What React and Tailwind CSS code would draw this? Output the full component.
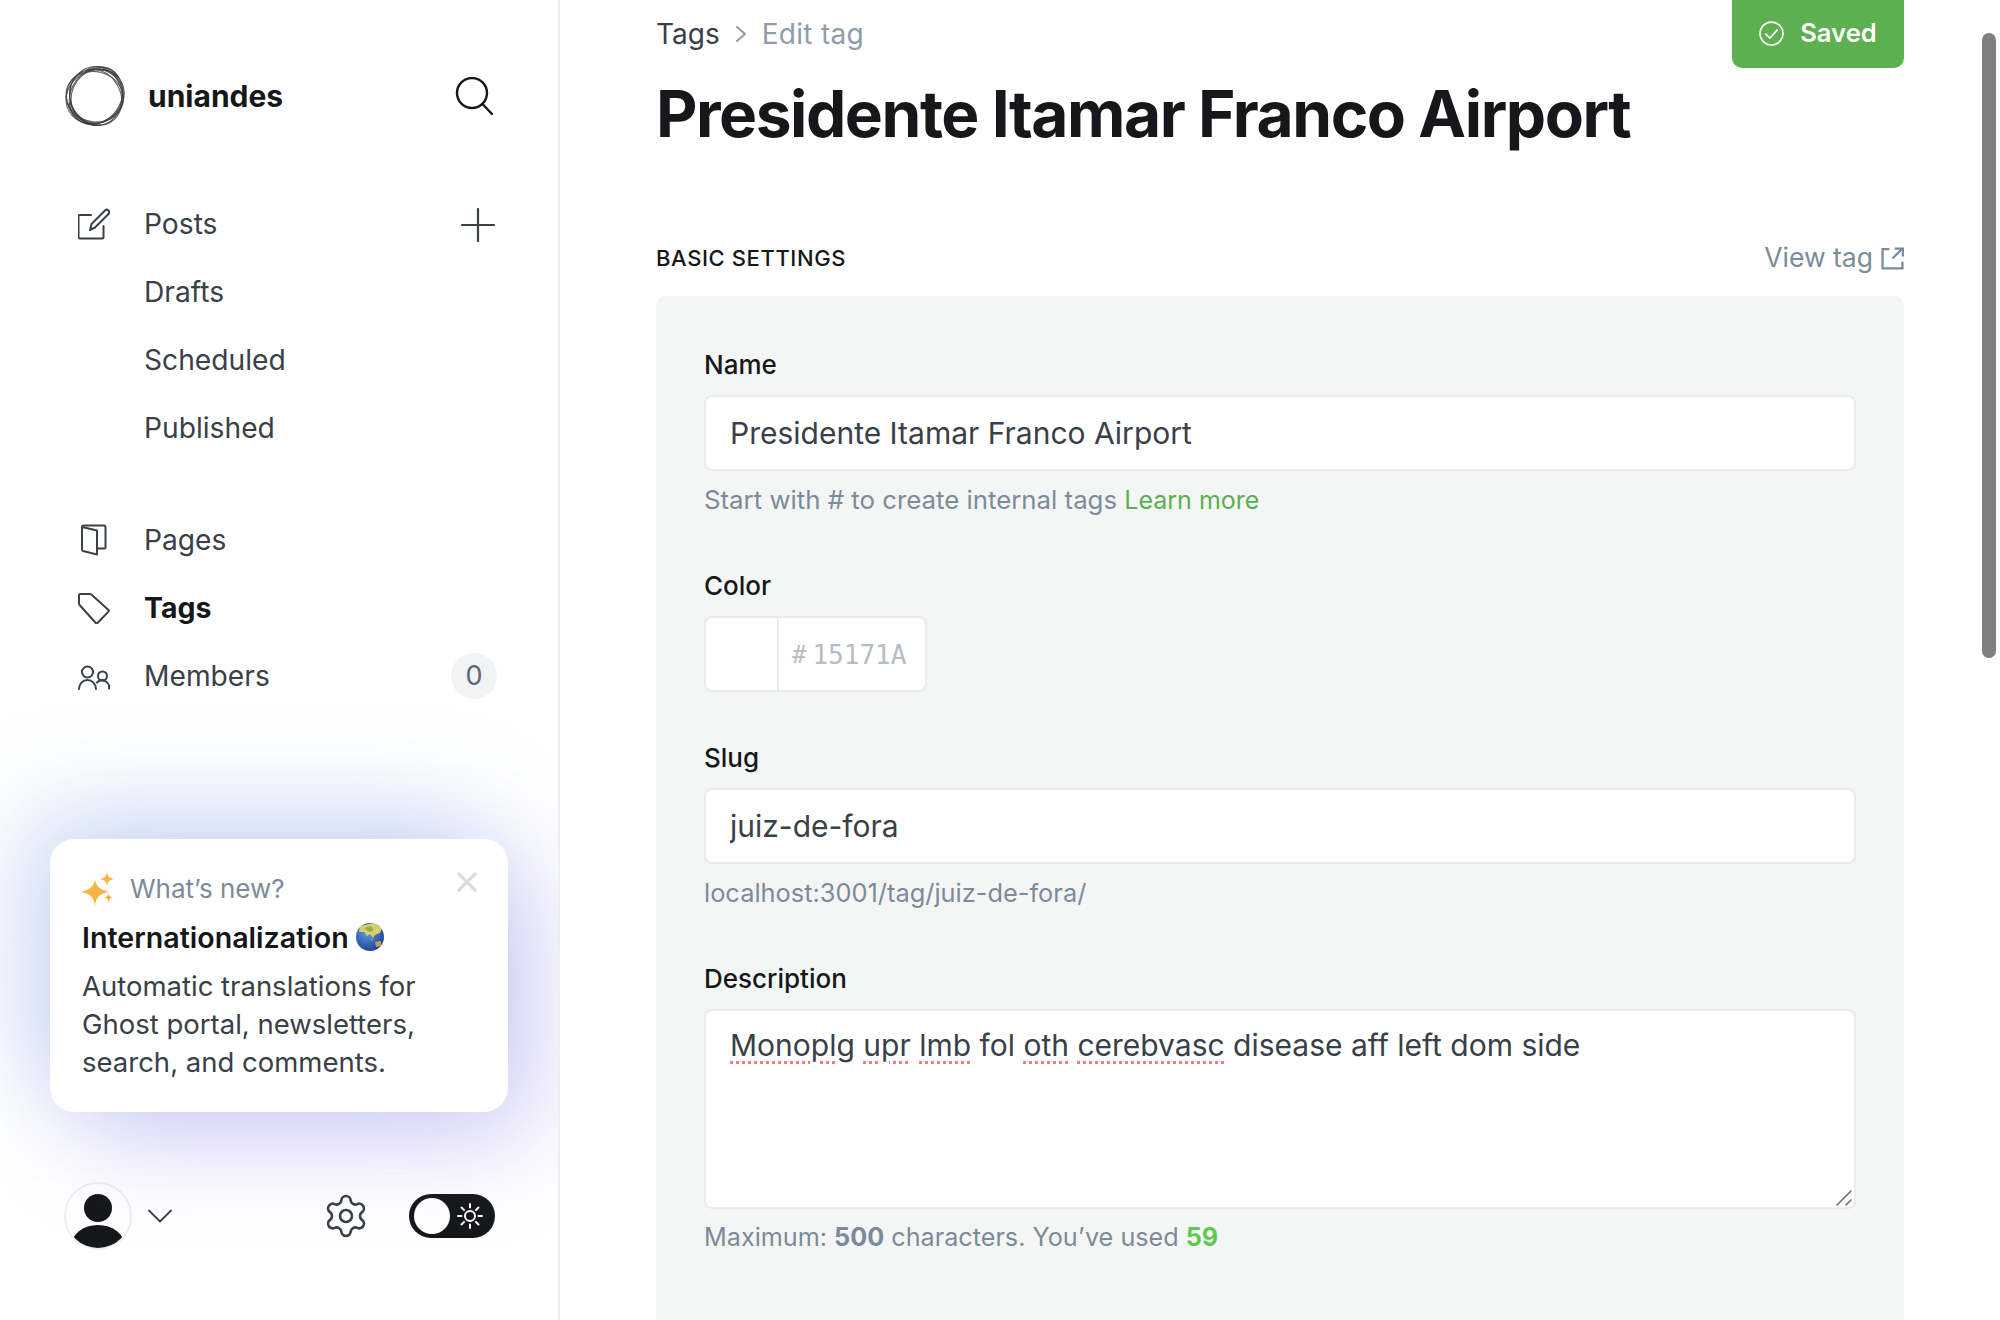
import React from 'react';
import { Settings } from 'lucide-react';

const Row = ({ icon, children, right, bold }) => (
  <div className="flex h-[68px] items-center">
    <div className="flex w-[80px] pl-[14px] shrink-0 items-center">{icon}</div>
    <span className={bold ? 'text-[28.500px] font-bold text-[#15171a]' : 'text-[28.200px] text-[#394047]'}>{children}</span>
    {right && <div className="ml-auto">{right}</div>}
  </div>
);

const Ico = ({ children, fill = 'none' }) => (
  <svg width="32" height="32" viewBox="0 0 32 32" fill={fill} stroke="#394047" strokeWidth="2" strokeLinejoin="round" strokeLinecap="round">{children}</svg>
);

const Logo = () => (
  <svg className="ml-[1px]" width="62" height="62" viewBox="0 0 62 62" fill="none" stroke="#3f3f3f" strokeWidth="1.100" strokeOpacity="0.8">
    <path d="M22 5C30 -1 46 1 52 10 56 17 52 9 44 6 36 4 28 5 22 5z" fill="#9a9a9a" fillOpacity="0.7" />
    <path d="M3 40C8 55 22 62 36 60 24 60 10 52 5 38z" fill="#777" fillOpacity="0.5" />
    <ellipse cx="30" cy="32" rx="29" ry="25" transform="rotate(15 31 31)" />
    <ellipse cx="31" cy="31" rx="25" ry="30" transform="rotate(35 31 31)" />
    <ellipse cx="31" cy="32" rx="26" ry="30" transform="rotate(60 31 31)" />
    <ellipse cx="30" cy="32" rx="25" ry="29" transform="rotate(-30 31 31)" />
    <ellipse cx="31" cy="31" rx="29.500" ry="26" transform="rotate(80 31 31)" />
    <ellipse cx="31" cy="32" rx="28" ry="25" transform="rotate(-60 31 31)" />
    <ellipse cx="30" cy="31" rx="28.500" ry="27" />
  </svg>
);

const Globe = () => (
  <svg width="28" height="28" viewBox="0 0 28 28">
    <defs>
      <radialGradient id="g" cx="40%" cy="35%" r="70%">
        <stop offset="0%" stopColor="#5b9be0" />
        <stop offset="100%" stopColor="#1d3f96" />
      </radialGradient>
      <clipPath id="c"><circle cx="14" cy="14" r="14" /></clipPath>
    </defs>
    <circle cx="14" cy="14" r="14" fill="url(#g)" />
    <g clipPath="url(#c)">
      <path d="M4 3 L18 0 L26 5 L24 10 L19 12 L17 15 L14 11 L11 13 L8 9 L3 9z" fill="#d6cf6a" />
      <path d="M8 5 L15 3 L18 7 L13 9z" fill="#8fb04f" />
      <path d="M19 19 L25 18 L25 23 L20 24z" fill="#c99a45" />
      <path d="M15 14 L17 17 L15 18z" fill="#8fb04f" />
    </g>
  </svg>
);

const Label = ({ children, className = '' }) => (
  <div className={`h-[34px] text-[26px] leading-[34px] font-medium text-[#15171a] ${className}`}>{children}</div>
);

const Hint = ({ children, className = '' }) => (
  <div className={`h-[36px] leading-[36px] text-[#7c8b9a] ${className}`}>{children}</div>
);

const field = 'block h-[76px] w-full rounded-[8px] border-2 border-[#e9ebec] bg-white px-[24px] text-[30px] text-[#394047] outline-none';

const Err = ({ children }) => (
  <span className="underline decoration-dotted decoration-[#f87c7c] decoration-[3px] underline-offset-[5px]">{children}</span>
);

export default function App() {
  return (
    <div className="relative flex h-[1320px] w-[2000px] overflow-hidden bg-white font-['Inter',sans-serif]">
      <aside className="flex h-full w-[560px] shrink-0 flex-col overflow-hidden border-r-2 border-[#eceef0] pl-[64px] pr-[62px]">
        <div className="mt-[64px] flex h-[64px] items-center">
          <Logo />
          <span className="ml-[21px] text-[30px] font-bold text-[#15171a]">uniandes</span>
          <svg className="ml-auto mr-[3px]" width="38" height="38" viewBox="0 0 38 38" fill="none" stroke="#15171a" strokeWidth="2.400" strokeLinecap="round">
            <circle cx="17" cy="16" r="15" />
            <path d="M27.500 27 L37 37" />
          </svg>
        </div>

        <nav className="mt-[62px]">
          <Row
            icon={<Ico><path d="M13 7H2a1.500 1.500 0 0 0-1.500 1.500V29A1.500 1.500 0 0 0 2 30.500h22a1.500 1.500 0 0 0 1.500-1.500V18" /><path d="M12 22l1.500-6L27 2.500a2.500 2.500 0 0 1 3.500 0 2.500 2.500 0 0 1 0 3.500L17 19.500z" /></Ico>}
            right={<svg className="mr-[1px] mt-[2px]" width="34" height="34" viewBox="0 0 34 34" stroke="#394047" strokeWidth="2.200" strokeLinecap="round"><path d="M17 1V33M1 17H33" /></svg>}
          >Posts</Row>
          <Row>Drafts</Row>
          <Row>Scheduled</Row>
          <Row>Published</Row>
        </nav>

        <nav className="mt-[44px]">
          <Row icon={<Ico><path d="M4 3L19 6.500V30.500L5 27a1.500 1.500 0 0 1-1-1.500z" /><path d="M4 3a1.500 1.500 0 0 1 1.500-1.500H26a1.500 1.500 0 0 1 1.500 1.500V23a1.500 1.500 0 0 1-1.500 1.500H19" /></Ico>}>Pages</Row>
          <Row bold icon={<Ico><path d="M1 3.500A1.500 1.500 0 0 1 2.500 2H12a2 2 0 0 1 1.400.6L30.500 18a1.200 1.200 0 0 1 0 1.600L19.500 31a1.200 1.200 0 0 1-1.700 0L1.600 13a2 2 0 0 1-.6-1.400z" /></Ico>}>Tags</Row>
          <Row
            icon={<Ico><circle cx="9.500" cy="12" r="5.500" /><path d="M1 29a8.500 9 0 0 1 17 0" /><circle cx="24.500" cy="16" r="4.500" /><path d="M19 22.500a7 7 0 0 1 12 6" /></Ico>}
            right={<div className="-mr-[1px] flex h-[46px] w-[46px] items-center justify-center rounded-full bg-[#f1f3f4] text-[27px] text-[#5b6773]">0</div>}
          >Members</Row>
        </nav>

        <div className="relative -ml-[14px] mt-[129px] h-[273px] w-[458px] rounded-[24px] bg-white px-[32px] pt-[32px] shadow-[-30px_-30px_100px_rgba(110,160,230,0.3),30px_30px_100px_rgba(125,105,230,0.3)]">
          <div className="flex h-[36px] items-center">
            <svg width="34" height="34" viewBox="0 0 34 34" fill="#f6b545">
              <path d="M13 7C14 14 17 17 27 20 17 22 14 25 13 34 12 25 9 22 -1 20 9 17 12 14 13 7z" />
              <path d="M25 0C25.700 4 27 6 32 7 27 8 25.700 10 25 14 24.300 10 23 8 18 7 23 6 24.300 4 25 0z" />
              <path d="M26.500 21C27 24 28 25 31 25.500 28 26 27 27 26.500 31 26 27 25 26 22 25.500 25 25 26 24 26.500 21z" />
            </svg>
            <span className="ml-[14px] -mt-[2px] text-[26px] text-[#7c8b9a]">What’s new?</span>
            <svg className="ml-auto mr-[-2px] mt-[-14px]" width="22" height="22" viewBox="0 0 22 22" stroke="#dcdcdc" strokeWidth="3.200"><path d="M2 2L20 20M20 2L2 20" /></svg>
          </div>
          <div className="mt-[12px] flex h-[38px] items-center text-[28.600px] font-semibold text-[#15171a]">
            Internationalization
            <span className="ml-[7px] -mt-[3px]"><Globe /></span>
          </div>
          <p className="mt-[10px] text-[27.500px] leading-[38px] text-[#394047]">Automatic translations for<br />Ghost portal, newsletters,<br />search, and comments.</p>
        </div>

        <div className="mt-[70px] flex h-[68px] items-center">
          <svg width="68" height="68" viewBox="0 0 68 68">
            <defs><clipPath id="av"><circle cx="34" cy="34" r="32" /></clipPath></defs>
            <circle cx="34" cy="34" r="33" fill="#fff" stroke="#eeeff0" strokeWidth="2" />
            <g clipPath="url(#av)" fill="#15171a">
              <circle cx="34" cy="26" r="14" />
              <ellipse cx="34" cy="64" rx="27" ry="21" />
            </g>
          </svg>
          <svg className="ml-[16px]" width="24" height="14" viewBox="0 0 24 14" fill="none" stroke="#394047" strokeWidth="1.800" strokeLinecap="round" strokeLinejoin="round"><path d="M1 1.500L12 12.500 23 1.500" /></svg>
          <Settings className="ml-[150px]" size={48} color="#394047" strokeWidth={1.3} />
          <div className="ml-[39px] flex h-[44px] w-[86px] items-center rounded-full bg-[#15171a] pl-[5px]">
            <div className="h-[36px] w-[36px] rounded-full bg-white" />
            <svg className="ml-[7px]" width="26" height="26" viewBox="0 0 26 26" fill="none" stroke="#fff" strokeWidth="2" strokeLinecap="round">
              <circle cx="13" cy="13" r="5" />
              <path d="M13 1V4.500M13 21.500V25M1 13H4.500M21.500 13H25M4.500 4.500L7 7M19 19L21.500 21.500M21.500 4.500L19 7M7 19L4.500 21.500" />
            </svg>
          </div>
        </div>
      </aside>

      <main className="min-w-0 flex-1 pl-[96px] pr-[96px]">
        <div className="flex h-[68px] items-center justify-between">
          <div className="flex items-center text-[28px] text-[#394047]">
            <span>Tags</span>
            <svg className="ml-[15px] mr-[15px]" width="12" height="20" viewBox="0 0 12 20" fill="none" stroke="#8e9cac" strokeWidth="2" strokeLinecap="round" strokeLinejoin="round"><path d="M2 3L10 10 2 17" /></svg>
            <span className="tracking-[0.3px] text-[#8e9cac]">Edit tag</span>
          </div>
          <div className="flex h-[68px] w-[172px] items-center justify-center gap-[16px] rounded-[10px] rounded-t-none bg-[#5cb050] pb-[2px] text-[25.600px] font-semibold text-white">
            <svg width="25" height="25" viewBox="0 0 24 24" fill="none" stroke="#fff" strokeWidth="1.600" strokeLinecap="round" strokeLinejoin="round"><circle cx="12" cy="12" r="11" /><path d="M6.500 12.500L10.500 16.500 17.500 8.500" /></svg>
            Saved
          </div>
        </div>
        <h1 className="mt-[7px] h-[78px] text-[64px] leading-[78px] font-bold tracking-[-1.460px] text-[#15171a]">Presidente Itamar Franco Airport</h1>
        <div className="mt-[85px] flex h-[40px] items-center justify-between">
          <span className="text-[22px] font-medium tracking-[0.600px] text-[#15171a]">BASIC SETTINGS</span>
          <span className="flex items-center gap-[8px] text-[26.500px] text-[#7c8b9a]">
            View tag
            <svg width="23" height="23" viewBox="0 0 22 22" fill="none" stroke="#7c8b9a" strokeWidth="2.200"><path d="M8 2H1.500V20.500H20.500V14M11 11L20.500 1.500M13 1.500H21V9" /></svg>
          </span>
        </div>
        <section className="mt-[18px] h-[1100px] rounded-[10px] bg-[#f4f6f6] px-[48px] pt-[52px]">
          <Label>Name</Label>
          <input className={`${field} mt-[13px]`} defaultValue="Presidente Itamar Franco Airport" />
          <Hint className="mt-[11px] text-[25.800px]">Start with # to create internal tags <span className="text-[25px] text-[#5cb050]">Learn more</span></Hint>

          <Label className="mt-[51px]">Color</Label>
          <div className="mt-[13px] flex h-[76px] w-[223px] overflow-hidden rounded-[8px] border-2 border-[#e9ebec] bg-white">
            <div className="w-[73px] border-r-2 border-[#e9ebec]" />
            <div className="flex flex-1 items-center pl-[13px] pt-[2px] font-['DejaVu_Sans_Mono',monospace] text-[26px] text-[#b5bdc7]">
              <span className="mr-[6px] text-[24px]">#</span>15171A
            </div>
          </div>

          <Label className="mt-[49px]">Slug</Label>
          <input className={`${field} mt-[13px]`} defaultValue="juiz-de-fora" />
          <Hint className="mt-[11px] text-[25.400px]">localhost:3001/tag/juiz-de-fora/</Hint>

          <Label className="mt-[51px]">Description</Label>
          <div className="relative mt-[13px] h-[200px] w-full overflow-hidden rounded-[8px] border-2 border-[#e9ebec] bg-white px-[24px] pt-[15px] text-[30px] leading-[38px] text-[#394047]">
            <Err>Monoplg</Err> <Err>upr</Err> <Err>lmb</Err> fol <Err>oth</Err> <Err>cerebvasc</Err> disease aff left dom side
            <svg className="absolute bottom-[1px] right-[2px]" width="16" height="16" viewBox="0 0 16 16" fill="none" stroke="#6a6a6a" strokeWidth="1.500" strokeLinecap="round"><path d="M1 15L15 1M10 15L15 10" /></svg>
          </div>
          <Hint className="mt-[10px] text-[25.200px]">Maximum: <b className="font-bold">500</b> characters. You’ve used <b className="font-bold text-[#5fc952]">59</b></Hint>
        </section>
      </main>

      <div className="absolute right-[4px] top-[33px] h-[625px] w-[14px] rounded-full bg-[#808080]" />
    </div>
  );
}
